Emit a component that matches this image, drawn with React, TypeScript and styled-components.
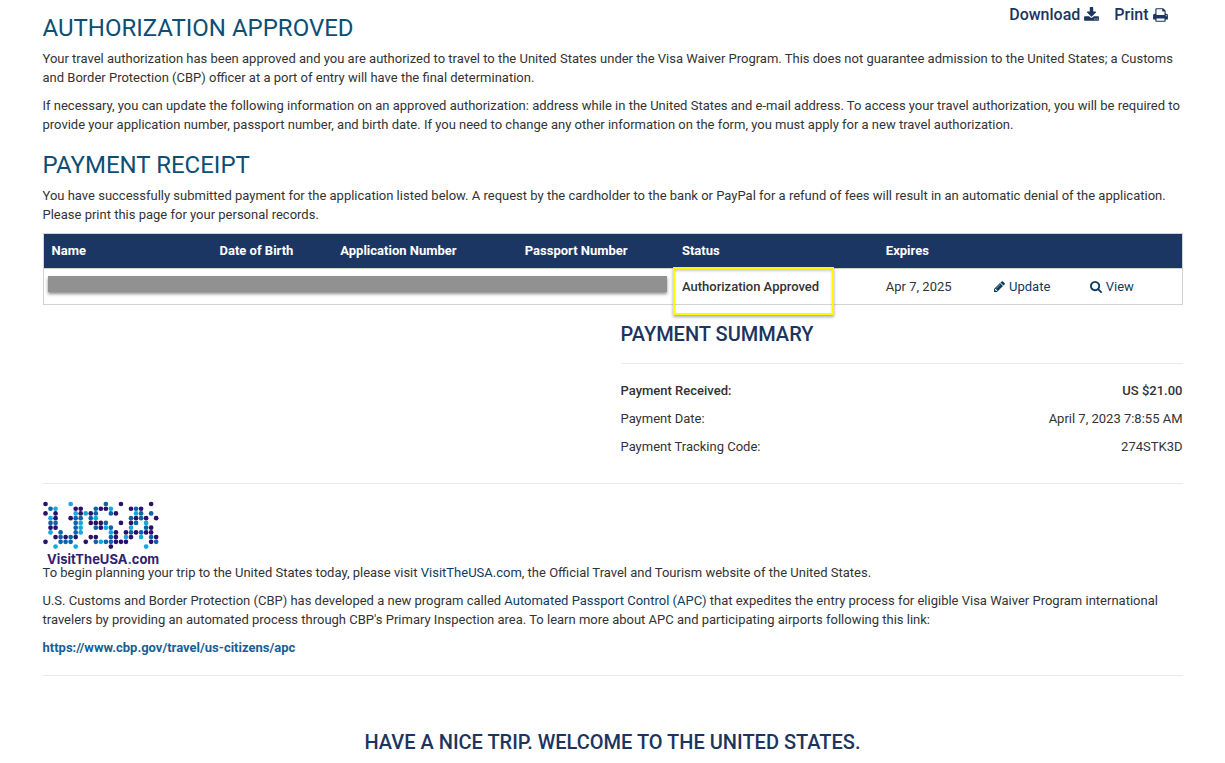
import React from "react";
import styled, { createGlobalStyle } from "styled-components";

const GlobalStyle = createGlobalStyle`
  *, *::before, *::after { box-sizing: border-box; }
  body {
    margin: 0;
    background: #fff;
    color: #333;
    font-family: Roboto, "Liberation Sans", sans-serif;
    font-size: 13px;
    line-height: 19px;
  }
`;

const Page = styled.main`
  max-width: 1170px;
  margin: 0 auto;
  padding: 5px 15px 8px;
`;

const Header = styled.header`
  display: flex;
  justify-content: space-between;
  align-items: flex-start;
`;

const Title = styled.h1`
  margin: 10px 0 8px;
  color: #0d4f73;
  font-size: 24px;
  line-height: 26px;
  font-weight: 400;
`;

const SectionTitle = styled(Title).attrs({ as: "h2" })`
  margin-top: 18px;
`;

const Actions = styled.div`
  display: flex;
  gap: 15px;
  padding-right: 15px;
`;

const ActionButton = styled.button`
  display: flex;
  align-items: center;
  gap: 4px;
  padding: 0;
  border: 0;
  background: none;
  color: #1c355e;
  font: 500 16px/19px Roboto, "Liberation Sans", sans-serif;
  cursor: pointer;
`;

const Glyph = styled.svg`
  flex: none;
  fill: currentColor;
`;

const Text = styled.p`
  margin: 0 0 9px;
`;

const TextLink = styled.a<{ $strong?: boolean }>`
  color: ${(p) => (p.$strong ? "#1b5e93" : "#0d3c61")};
  font-weight: ${(p) => (p.$strong ? 700 : 400)};
  text-decoration: none;
`;

const TableFrame = styled.div`
  position: relative;
`;

const Table = styled.table`
  width: 100%;
  table-layout: fixed;
  border-collapse: collapse;
  border: 1px solid #d2d2d2;
`;

const HeadCell = styled.th<{ $width: string }>`
  width: ${(p) => p.$width};
  padding: 8px;
  background: #1c3664;
  color: #fff;
  font-weight: 700;
  line-height: 18px;
  text-align: left;
`;

const Cell = styled.td`
  position: relative;
  padding: 8px;
  border-top: 1px solid #d2d2d2;
  line-height: 19px;
  vertical-align: top;
`;

const StatusText = styled.strong`
  font-weight: 500;
`;

const Redaction = styled.span`
  position: absolute;
  top: 43px;
  left: 5px;
  width: 54.3%;
  height: 16px;
  background: #919191;
  box-shadow: 0 2px 3px rgba(0, 0, 0, 0.45);
`;

const Highlight = styled.span`
  position: absolute;
  top: -2px;
  left: -1px;
  width: 161px;
  height: 48px;
  border: 2px solid #fdf900;
  box-shadow: 0 2px 3px rgba(0, 0, 0, 0.35), inset 0 2px 3px rgba(0, 0, 0, 0.2);
  pointer-events: none;
`;

const RowLink = styled(TextLink)`
  display: flex;
  align-items: center;
  gap: 4px;
`;

const SummaryGrid = styled.div`
  display: grid;
  grid-template-columns: 1fr 1fr;
  column-gap: 16px;
`;

const Summary = styled.section`
  grid-column: 2;
  padding-top: 18px;
`;

const SmallTitle = styled.h3<{ $centered?: boolean }>`
  margin: 0;
  color: #1c355e;
  font-size: 20px;
  line-height: 22px;
  font-weight: 500;
  text-align: ${(p) => (p.$centered ? "center" : "left")};
`;

const Rule = styled.hr<{ $above: number; $below: number }>`
  height: 1px;
  margin: ${(p) => p.$above}px 0 ${(p) => p.$below}px;
  border: 0;
  background: #eaeaea;
`;

const Details = styled.dl`
  margin: 0;
`;

const Detail = styled.div<{ $strong?: boolean }>`
  display: flex;
  justify-content: space-between;
  padding: 4px 0 5px;
  line-height: 19px;
  font-weight: ${(p) => (p.$strong ? 500 : 400)};

  dd { margin: 0; }
`;

const Logo = styled.svg`
  display: block;
  overflow: visible;
`;

const Closing = styled.footer`
  padding-top: 55px;
`;

const icons = {
  download: {
    box: "64 0 1664 1792",
    d: "M1344 1344q0-26-19-45t-45-19-45 19-19 45 19 45 45 19 45-19 19-45zm256 0q0-26-19-45t-45-19-45 19-19 45 19 45 45 19 45-19 19-45zm128-224v320q0 40-28 68t-68 28h-1472q-40 0-68-28t-28-68v-320q0-40 28-68t68-28h465l135 136q58 56 136 56t136-56l136-136h464q40 0 68 28t28 68zm-325-569q17 41-14 70l-448 448q-18 19-45 19t-45-19l-448-448q-31-29-14-70 17-39 59-39h256v-448q0-26 19-45t45-19h256q26 0 45 19t19 45v448h256q42 0 59 39z",
  },
  print: {
    box: "64 0 1664 1792",
    d: "M448 1536h896v-256h-896v256zm0-640h896v-384h-160q-40 0-68-28t-28-68v-160h-640v640zm1152 64q0-26-19-45t-45-19-45 19-19 45 19 45 45 19 45-19 19-45zm128 0v416q0 13-9.5 22.5t-22.5 9.5h-224v160q0 40-28 68t-68 28h-960q-40 0-68-28t-28-68v-160h-224q-13 0-22.5-9.5t-9.5-22.5v-416q0-79 56.5-135.5t135.5-56.5h64v-544q0-40 28-68t68-28h672q40 0 88 20t76 48l152 152q28 28 48 76t20 88v256h64q79 0 135.5 56.5t56.5 135.5z",
  },
  pencil: {
    box: "128 128 1536 1536",
    d: "M491 1536l91-91-235-235-91 91v107h128v128h107zm523-928q0-22-22-22-10 0-17 7l-542 542q-7 7-7 17 0 22 22 22 10 0 17-7l542-542q7-7 7-17zm-54-192l416 416-832 832h-416v-416zm683 96q0 53-37 90l-166 166-416-416 166-165q36-38 90-38 53 0 91 38l235 234q37 39 37 91z",
  },
  search: {
    box: "64 128 1664 1664",
    d: "M1216 832q0-185-131.5-316.5t-316.5-131.5-316.5 131.5-131.5 316.5 131.5 316.5 316.5 131.5 316.5-131.5 131.5-316.5zm512 832q0 52-38 90t-90 38q-54 0-90-38l-343-342q-179 124-399 124-143 0-273.5-55.5t-225-150-150-225-55.5-273.5 55.5-273.5 150-225 225-150 273.5-55.5 273.5 55.5 225 150 150 225 55.5 273.5q0 220-124 399l343 343q37 37 37 90z",
  },
};

function Icon({ name, width, height }: { name: keyof typeof icons; width: number; height: number }) {
  return (
    <Glyph width={width} height={height} viewBox={icons[name].box} aria-hidden="true">
      <path d={icons[name].d} />
    </Glyph>
  );
}

/* One letter per dot: P purple, B blue, C cyan. */
const logoRows = [
  "P....C......B..P.....P.",
  ".BC...PP..BPPC...PBP...",
  "P.P...CPCPB..BP...CB.B.",
  ".CP..PBB.BC......BPBP.P",
  ".BB...BC.PPPB..P.PB.C..",
  ".PP...BC..BPCB...C..BP.",
  ".C.B..BC.....CP.PBPBPP.",
  "..PBPBP..PP..BP.CP.C.BP",
  "P..BBB..P.BCBBPPP....PB",
  "..C...C......P......C..",
];
const dotColors: Record<string, string> = { P: "#2a0f6b", B: "#0d62a8", C: "#14a9dd" };

function VisitLogo() {
  return (
    <Logo width="118" height="62" viewBox="0 0 118 62" role="img" aria-label="VisitTheUSA.com">
      {logoRows.flatMap((row, y) =>
        [...row].map((dot, x) =>
          dot === "." ? null : (
            <circle key={`${x}-${y}`} cx={2.5 + x * 5.03} cy={3 + y * 4.73} r="2.35" fill={dotColors[dot]} />
          ),
        ),
      )}
      <text x="4" y="63" fontFamily="Inter, sans-serif" fontSize="13" fontWeight="700" fill="#34206f">
        VisitTheUSA<tspan fill="#0d76b8">.</tspan>com
      </text>
    </Logo>
  );
}

const columns: [string, string][] = [
  ["Name", "14.8%"],
  ["Date of Birth", "10.6%"],
  ["Application Number", "16.2%"],
  ["Passport Number", "13.8%"],
  ["Status", "17.9%"],
  ["Expires", "9.5%"],
  ["", "8.4%"],
  ["", "8.8%"],
];

export default function App() {
  return (
    <>
      <GlobalStyle />
      <Page>
        <Header>
          <Title>AUTHORIZATION APPROVED</Title>
          <Actions>
            <ActionButton type="button">Download <Icon name="download" width={15} height={16} /></ActionButton>
            <ActionButton type="button">Print <Icon name="print" width={15} height={16} /></ActionButton>
          </Actions>
        </Header>
        <Text>
          Your travel authorization has been approved and you are authorized to travel to the United States under the
          Visa Waiver Program. This does not guarantee admission to the United States; a Customs and Border Protection
          (CBP) officer at a port of entry will have the final determination.
        </Text>
        <Text>
          If necessary, you can update the following information on an approved authorization: address while in the
          United States and e-mail address. To access your travel authorization, you will be required to provide your
          application number, passport number, and birth date. If you need to change any other information on the form,
          you must apply for a new travel authorization.
        </Text>

        <SectionTitle>PAYMENT RECEIPT</SectionTitle>
        <Text>
          You have successfully submitted payment for the application listed below. A request by the cardholder to the
          bank or PayPal for a refund of fees will result in an automatic denial of the application. Please print this
          page for your personal records.
        </Text>
        <TableFrame>
          <Table>
            <thead>
              <tr>
                {columns.map(([label, width], i) => (
                  <HeadCell key={i} $width={width} scope="col">{label}</HeadCell>
                ))}
              </tr>
            </thead>
            <tbody>
              <tr>
                <Cell />
                <Cell />
                <Cell />
                <Cell />
                <Cell>
                  <StatusText>Authorization Approved</StatusText>
                  <Highlight />
                </Cell>
                <Cell>Apr 7, 2025</Cell>
                <Cell><RowLink href="#update"><Icon name="pencil" width={11} height={11} />Update</RowLink></Cell>
                <Cell><RowLink href="#view"><Icon name="search" width={12} height={12} />View</RowLink></Cell>
              </tr>
            </tbody>
          </Table>
          <Redaction />
        </TableFrame>

        <SummaryGrid>
          <Summary>
            <SmallTitle>PAYMENT SUMMARY</SmallTitle>
            <Rule $above={18} $below={13} />
            <Details>
              <Detail $strong><dt>Payment Received:</dt><dd>US $21.00</dd></Detail>
              <Detail><dt>Payment Date:</dt><dd>April 7, 2023 7:8:55 AM</dd></Detail>
              <Detail><dt>Payment Tracking Code:</dt><dd>274STK3D</dd></Detail>
            </Details>
          </Summary>
        </SummaryGrid>

        <Rule $above={22} $below={17} />
        <VisitLogo />
        <Text>
          To begin planning your trip to the United States today, please visit{" "}
          <TextLink href="#visit">VisitTheUSA.com</TextLink>, the Official Travel and Tourism website of the United
          States.
        </Text>
        <Text>
          U.S. Customs and Border Protection (CBP) has developed a new program called{" "}
          <TextLink href="#apc">Automated Passport Control (APC)</TextLink> that expedites the entry process for
          eligible Visa Waiver Program international travelers by providing an automated process through CBP's Primary
          Inspection area. To learn more about APC and participating airports following this link:
        </Text>
        <Text>
          <TextLink $strong href="https://www.cbp.gov/travel/us-citizens/apc">
            https://www.cbp.gov/travel/us-citizens/apc
          </TextLink>
        </Text>
        <Rule $above={18} $below={0} />
        <Closing>
          <SmallTitle $centered>HAVE A NICE TRIP. WELCOME TO THE UNITED STATES.</SmallTitle>
        </Closing>
      </Page>
    </>
  );
}
